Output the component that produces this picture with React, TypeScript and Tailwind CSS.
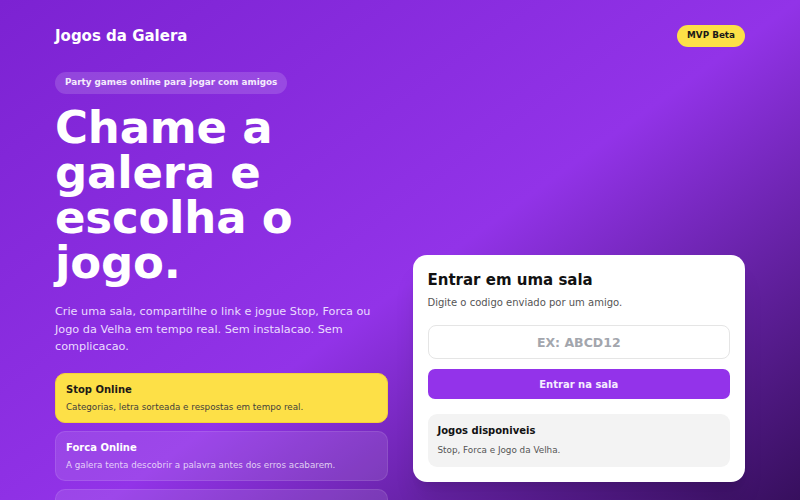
import { useState } from 'react';

interface Game {
  title: string;
  description: string;
  active?: boolean;
}

const games: Game[] = [
  { title: 'Stop Online', description: 'Categorias, letra sorteada e respostas em tempo real.', active: true },
  { title: 'Forca Online', description: 'A galera tenta descobrir a palavra antes dos erros acabarem.' },
  { title: 'Jogo da Velha', description: 'Partidas rapidas de X e O com a sua turma.' },
];

function GameCard({ game }: { game: Game }) {
  return (
    <div
      className={`rounded-[10px] border px-[10px] pt-[8px] pb-[8px] ${
        game.active
          ? 'bg-[#fde047] border-[#f5cf3a] text-[#1c1917]'
          : 'bg-white/10 border-white/10 text-white'
      }`}
    >
      <div className="text-[10px] font-bold leading-[16px]">{game.title}</div>
      <div className={`mt-[2px] text-[8.75px] leading-[14px] ${game.active ? 'text-[#44403c]' : 'text-white/75'}`}>
        {game.description}
      </div>
    </div>
  );
}

export default function App() {
  const [code, setCode] = useState('');

  return (
    <div
      className="min-h-screen bg-gradient-to-br from-[#7c22d2] via-[#9233e8] to-[#2a0a4a] text-white"
      style={{ fontFamily: '"DejaVu Sans", Verdana, sans-serif' }}
    >
      <div className="px-[55px] pb-10">
        {/* Header */}
        <header className="flex items-center justify-between h-[72px]">
          <span className="text-[15px] font-bold">Jogos da Galera</span>
          <span className="rounded-full bg-[#fde047] px-[10px] h-[22px] flex items-center text-[8.8px] font-bold text-[#1c1917]">
            MVP Beta
          </span>
        </header>

        <div className="grid grid-cols-2 gap-[25px]">
          {/* Left column */}
          <div className="flex flex-col">
            <span className="self-start rounded-full bg-white/15 px-[10px] h-[22px] flex items-center text-[8.8px] font-bold text-white/90">
              Party games online para jogar com amigos
            </span>
            <h1 className="mt-[11px] text-[45px] font-bold leading-[45px] tracking-[-0.2px]">
              Chame a galera e escolha o jogo.
            </h1>
            <p className="mt-[18px] text-[11.25px] leading-[17.5px] text-[#eadcff]">
              Crie uma sala, compartilhe o link e jogue Stop, Forca ou Jogo da Velha em tempo real. Sem instalacao. Sem complicacao.
            </p>
            <div className="mt-[17px] flex flex-col gap-[8px]">
              {games.map(g => (
                <GameCard key={g.title} game={g} />
              ))}
            </div>
          </div>

          {/* Right column */}
          <div className="pt-[183px]">
            <div className="rounded-[14px] bg-white px-[15px] pt-[14px] pb-[15px] text-[#111] shadow-xl">
              <h2 className="text-[15px] font-bold leading-[22px]">Entrar em uma sala</h2>
              <p className="mt-[4px] text-[10px] leading-[15px] text-[#555]">Digite o codigo enviado por um amigo.</p>
              <input
                value={code}
                onChange={e => setCode(e.target.value.toUpperCase())}
                placeholder="EX: ABCD12"
                className="mt-[15px] w-full h-[34px] rounded-[8px] border border-[#e5e5e5] text-center text-[12.5px] font-bold text-[#333] placeholder-[#a3a6ad] outline-none"
              />
              <button className="mt-[10px] w-full h-[30px] rounded-[7px] bg-[#9333ea] text-[10px] font-bold text-[#f5ecff]">
                Entrar na sala
              </button>
              <div className="mt-[15px] rounded-[9px] bg-[#f3f3f3] px-[10px] pt-[9px] pb-[10px]">
                <div className="text-[10px] font-bold leading-[16px]">Jogos disponiveis</div>
                <div className="mt-[4px] text-[8.8px] leading-[14px] text-[#555]">Stop, Forca e Jogo da Velha.</div>
              </div>
            </div>
          </div>
        </div>
      </div>
    </div>
  );
}
